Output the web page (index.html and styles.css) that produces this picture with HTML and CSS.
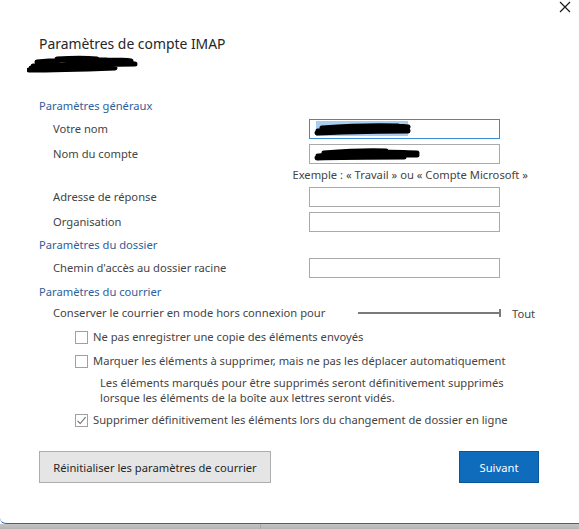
FILE: index.html
```html
<!DOCTYPE html>
<html lang="fr">
<head>
<meta charset="utf-8">
<title>Paramètres de compte IMAP</title>
<link rel="stylesheet" href="styles.css">
</head>
<body>
<div class="screen">
  <div class="dialog">
    <button class="close" aria-label="Fermer">
      <svg width="12" height="12" viewBox="0 0 12 12"><path d="M1 1L11 11M11 1L1 11" stroke="#1a1a1a" stroke-width="1.2" fill="none"/></svg>
    </button>
    <div class="content">
      <h1 class="title">Paramètres de compte IMAP</h1>
      <svg class="scribble-title" width="114" height="18" viewBox="0 0 114 18">
        <path d="M4 13 C25 12 50 11 75 10 C90 9 100 9 108 9 M2 15 C30 15 60 14 88 13 M10 7 C30 5 55 4 80 5 C90 5 98 5 104 6 M6 11 C35 10 65 9 100 9 M30 4 C45 3 60 3 70 4" stroke="#000" stroke-width="5" fill="none" stroke-linecap="round"/>
      </svg>

      <div class="section-head first">Paramètres généraux</div>
      <div class="row">
        <span class="label">Votre nom</span>
        <div class="field focused">
          <span class="selection"></span>
          <svg class="scribble" width="100" height="16" viewBox="0 0 100 16"><path d="M4 10 C25 8 50 7 72 6 C80 5 88 5 94 6 M3 12 C30 11 60 10 92 10 M8 7 C35 5 60 4 84 5 M70 9 C78 8 86 9 94 10" stroke="#000" stroke-width="5" fill="none" stroke-linecap="round"/></svg>
        </div>
      </div>
      <div class="row">
        <span class="label">Nom du compte</span>
        <div class="field">
          <svg class="scribble" width="108" height="16" viewBox="0 0 108 16"><path d="M4 10 C25 8 45 6 65 6 C80 6 95 7 103 7 M3 12 C30 11 60 11 90 11 M10 7 C35 5 55 4 72 5 M60 9 C75 9 90 9 103 9" stroke="#000" stroke-width="5" fill="none" stroke-linecap="round"/></svg>
        </div>
      </div>
      <div class="hint">Exemple : « Travail » ou « Compte Microsoft »</div>
      <div class="row r3">
        <span class="label">Adresse de réponse</span>
        <div class="field"></div>
      </div>
      <div class="row">
        <span class="label">Organisation</span>
        <div class="field"></div>
      </div>

      <div class="section-head">Paramètres du dossier</div>
      <div class="row">
        <span class="label">Chemin d'accès au dossier racine</span>
        <div class="field"></div>
      </div>

      <div class="section-head s3">Paramètres du courrier</div>
      <div class="slider-row">
        <span class="label">Conserver le courrier en mode hors connexion pour</span>
        <span class="slider"><span class="track"></span><span class="tick"></span></span>
        <span class="slider-value">Tout</span>
      </div>
      <label class="check c1"><span class="box"></span><span>Ne pas enregistrer une copie des éléments envoyés</span></label>
      <label class="check c2"><span class="box"></span><span>Marquer les éléments à supprimer, mais ne pas les déplacer automatiquement</span></label>
      <p class="desc">Les éléments marqués pour être supprimés seront définitivement supprimés<br>lorsque les éléments de la boîte aux lettres seront vidés.</p>
      <label class="check c3"><span class="box checked"><svg width="11" height="11" viewBox="0 0 11 11"><path d="M1.5 5.8L4.2 8.5L9.6 2.2" stroke="#6f6f6f" stroke-width="1.1" fill="none"/></svg></span><span>Supprimer définitivement les éléments lors du changement de dossier en ligne</span></label>

      <div class="buttons">
        <button class="btn secondary">Réinitialiser les paramètres de courrier</button>
        <button class="btn primary">Suivant</button>
      </div>
    </div>
  </div>
  <div class="taskbar"><span class="seg"></span></div>
</div>
</body>
</html>
```

FILE: styles.css
```css
* { box-sizing: border-box; }
html, body { margin: 0; padding: 0; }
body {
  width: 579px;
  height: 529px;
  overflow: hidden;
  background: #fff;
  font-family: "Noto Sans", "Open Sans", sans-serif;
  font-size: 11.2px;
  color: #444;
}
.screen { display: flex; flex-direction: column; height: 529px; }
.dialog {
  position: relative;
  height: 524px;
  background: #fff;
  border-bottom: 1px solid #2a67a8;
  border-bottom-left-radius: 6px;
}
.close {
  position: absolute;
  top: 1px;
  right: 8px;
  width: 12px;
  height: 12px;
  padding: 0;
  border: 0;
  background: none;
  display: flex;
}
.content {
  width: 500px;
  margin-left: 39px;
  padding-top: 34px;
  display: flex;
  flex-direction: column;
}
.title {
  margin: 0;
  font-weight: 400;
  font-size: 13.9px;
  line-height: 20px;
  height: 20px;
  color: #262626;
}
.scribble-title { display: block; margin-left: -12px; margin-top: 1px; }
.section-head {
  color: #2e5e9c;
  height: 16px;
  line-height: 16px;
  margin-top: 5px;
}
.section-head.first { margin-top: 25px; }
.section-head.s3 { margin-top: 6px; }
.row {
  display: grid;
  grid-template-columns: 270px 191px;
  height: 20px;
  margin-top: 5px;
  align-items: center;
}
.row.r3 { margin-top: 4px; }
.label { padding-left: 14px; line-height: 20px; white-space: nowrap; }
.field {
  position: relative;
  height: 20px;
  border: 1px solid #a9a9a9;
  background: #fff;
}
.field.focused { border-color: #3a8bd6; }
.selection {
  position: absolute;
  left: 6px;
  top: 1px;
  width: 92px;
  height: 15px;
  background: #a9cdf0;
}
.scribble { position: absolute; left: 4px; top: 1px; }
.hint {
  height: 16px;
  line-height: 16px;
  margin-top: 3px;
  text-align: right;
  padding-right: 11px;
}
.slider-row {
  display: flex;
  align-items: center;
  height: 16px;
  margin-top: 5px;
}
.slider-row .label { width: 319px; line-height: 16px; }
.slider { position: relative; width: 144px; height: 16px; display: flex; align-items: center; }
.track { display: block; width: 143px; height: 2px; background: #7a7a7a; }
.tick { position: absolute; right: 1px; top: 4px; width: 2px; height: 8px; background: #7a7a7a; }
.slider-value { margin-left: 10px; }
.check {
  display: flex;
  align-items: center;
  gap: 5px;
  height: 16px;
  line-height: 16px;
  margin-left: 36px;
  margin-top: 8px;
}
.check.c3 { margin-top: 7px; }
.box {
  width: 13px;
  height: 13px;
  border: 1px solid #a0a0a0;
  background: #fff;
  display: flex;
  align-items: center;
  justify-content: center;
  flex: none;
}
.desc {
  margin: 6px 0 0 61px;
  line-height: 15px;
  height: 30px;
}
.buttons {
  display: flex;
  justify-content: space-between;
  margin-top: 23px;
}
.btn {
  height: 32px;
  font-family: inherit;
  font-size: 11.2px;
  padding: 0;
}
.btn.secondary {
  width: 232px;
  background: #e5e5e5;
  border: 1px solid #adadad;
  color: #262626;
}
.btn.primary {
  width: 80px;
  background: #0f6cbd;
  border: 1px solid #0a5596;
  color: #fff;
}
.taskbar {
  flex: 1;
  background: linear-gradient(#c4c4c4, #b4b4b4);
  position: relative;
}
.seg { position: absolute; left: 260px; top: 0; bottom: 0; width: 1px; background: #a8a8a8; }
```
